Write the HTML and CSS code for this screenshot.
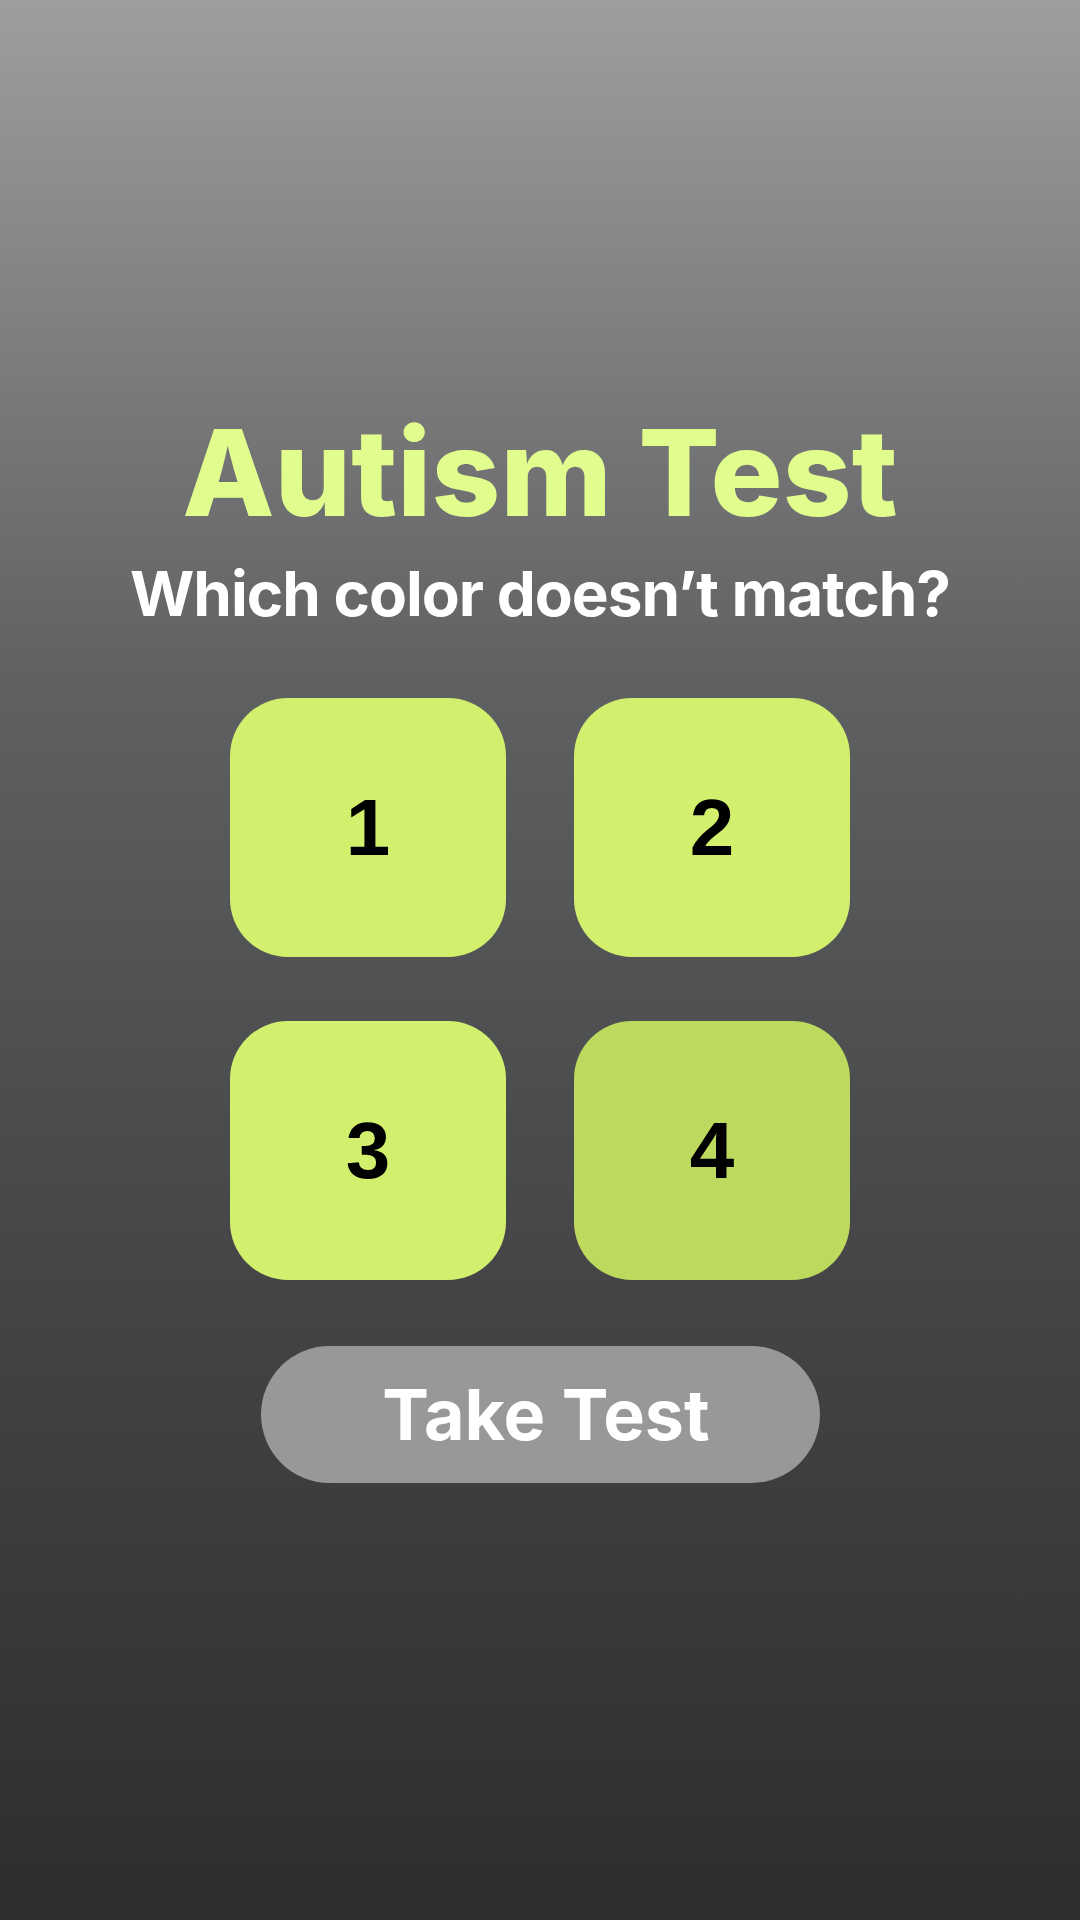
FILE: index.html
```html
<!DOCTYPE html>
<html lang="en">
<head>
    <meta charset="UTF-8">
    <meta name="viewport" content="width=device-width, initial-scale=1.0">
    <title>Autism Test</title>
    <link rel="stylesheet" href="styles.css">
</head>
<body>
    <main class="screen">
        <h1 class="title">Autism Test</h1>
        <p class="subtitle">Which color doesn’t match?</p>
        <div class="tiles">
            <button class="tile">1</button>
            <button class="tile">2</button>
            <button class="tile">3</button>
            <button class="tile odd">4</button>
        </div>
        <button class="take-test">Take Test</button>
    </main>
</body>
</html>
```

FILE: styles.css
```css
html, body {
    margin: 0;
    padding: 0;
}

body {
    font-family: 'Inter', 'Liberation Sans', sans-serif;
    min-height: 1920px;
    background: linear-gradient(to bottom,
        #9e9e9e 0%,
        #7a7a7b 20%,
        #606163 35%,
        #505153 52%,
        #434345 69%,
        #2d2d2d 100%);
}

.screen {
    display: flex;
    flex-direction: column;
    align-items: center;
    padding-top: 413px;
}

.title {
    margin: 0;
    font-size: 120px;
    line-height: 120px;
    font-weight: 800;
    color: #e1fd8d;
    letter-spacing: 0.2px;
}

.subtitle {
    margin: 30px 0 0;
    font-size: 62px;
    line-height: 62px;
    font-weight: 700;
    color: #fff;
    letter-spacing: -1px;
}

.tiles {
    display: grid;
    grid-template-columns: 276px 276px;
    grid-auto-rows: 259px;
    column-gap: 68px;
    row-gap: 64px;
    margin-top: 73px;
}

.tile {
    border: none;
    border-radius: 58px;
    background-color: #d2f06e;
    color: #000;
    font-family: 'Liberation Sans', Arial, sans-serif;
    font-weight: bold;
    font-size: 80px;
    cursor: pointer;
}

.tile.odd {
    background-color: #bdda5e;
}

.take-test {
    margin-top: 66px;
    width: 559px;
    height: 137px;
    padding: 0 0 0 12px;
    border: none;
    border-radius: 69px;
    background-color: #989898;
    color: #fff;
    font-family: 'Inter', 'Liberation Sans', sans-serif;
    font-size: 70px;
    font-weight: 700;
    cursor: pointer;
}
```
